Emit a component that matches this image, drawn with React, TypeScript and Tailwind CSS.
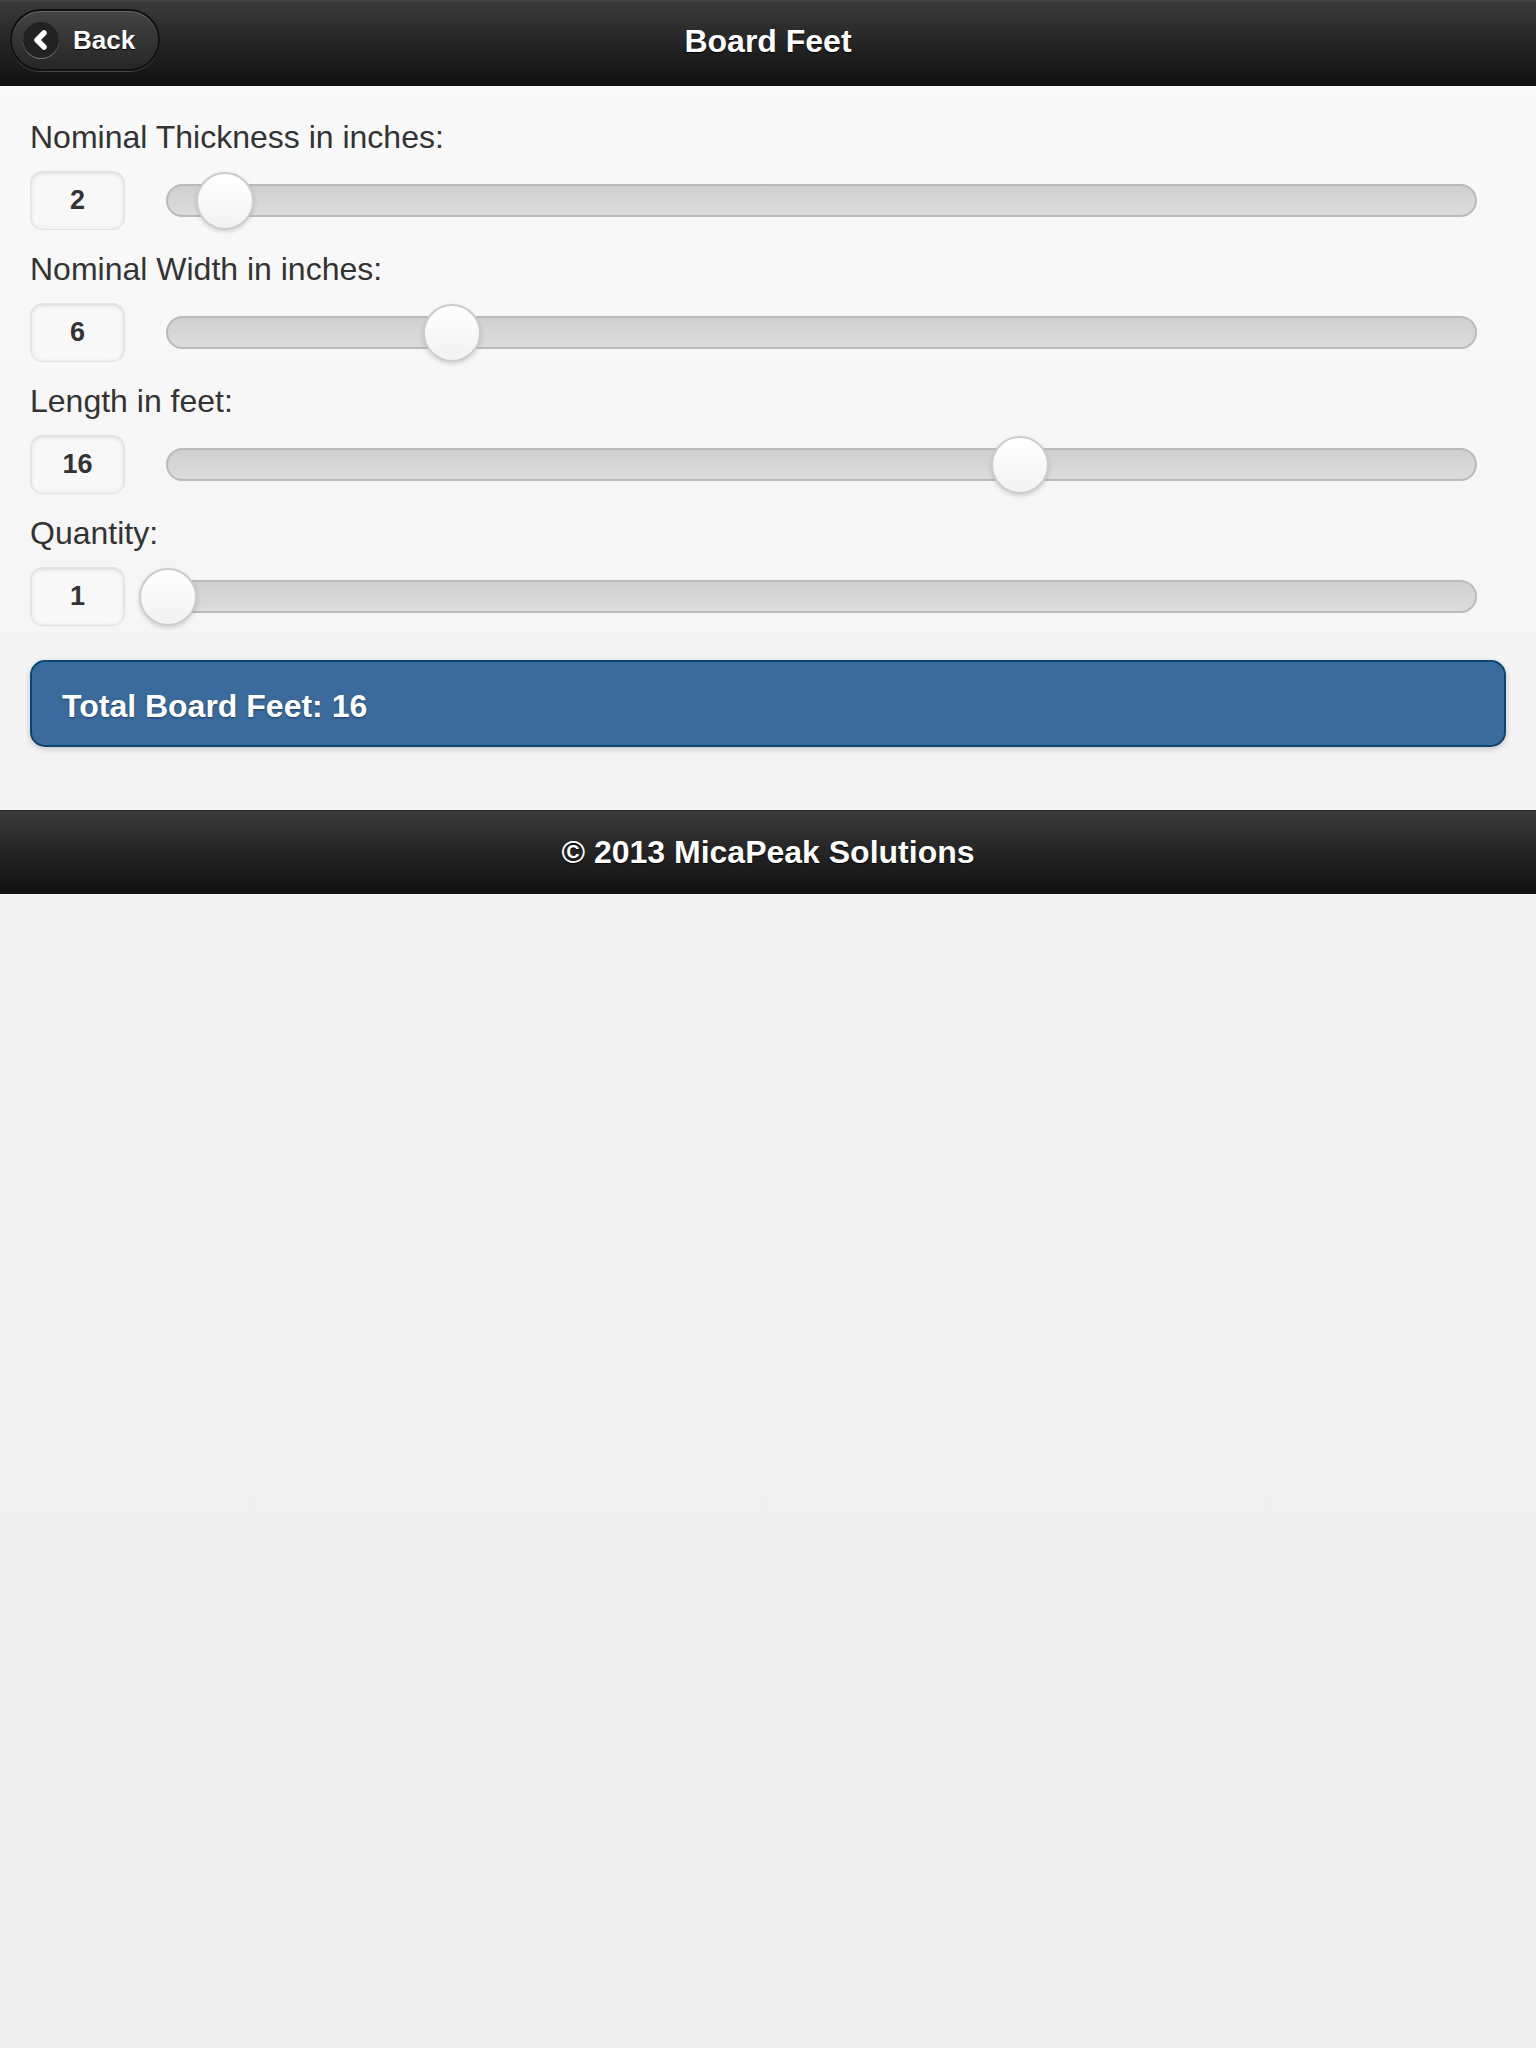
import React from "react";

const rows = [
  { label: "Nominal Thickness in inches:", value: 2, min: 1, max: 24 },
  { label: "Nominal Width in inches:", value: 6, min: 1, max: 24 },
  { label: "Length in feet:", value: 16, min: 1, max: 24 },
  { label: "Quantity:", value: 1, min: 1, max: 24 },
];

function SliderRow({ label, value, min, max }: { label: string; value: number; min: number; max: number }) {
  const pct = ((value - min) / (max - min)) * 100;
  return (
    <div className="flex flex-col gap-4">
      <label className="text-[32px] leading-[36px] text-[#333]">{label}</label>
      <div className="flex items-center h-[59px]">
        <div className="w-[95px] h-[59px] rounded-[12px] border border-[#e2e2e2] bg-[#f8f8f8] shadow-[inset_0_1px_4px_rgba(0,0,0,0.15)] flex items-center justify-center text-[27px] font-bold text-[#333]">
          {value}
        </div>
        <div className="relative flex-1 ml-[41px] mr-[29px] h-[33px] rounded-full border-2 border-[#bbb] bg-gradient-to-b from-[#d0d0d0] to-[#dcdcdc]">
          <div
            className="absolute top-1/2 w-[58px] h-[58px] -translate-x-1/2 -translate-y-1/2 rounded-full border-2 border-[#ccc] bg-gradient-to-b from-white to-[#f2f2f2] shadow-[0_2px_4px_rgba(0,0,0,0.15)]"
            style={{ left: `${pct}%` }}
          />
        </div>
      </div>
    </div>
  );
}

export default function App() {
  return (
    <div className="min-h-[2048px] flex flex-col bg-gradient-to-b from-[#f4f4f4] to-[#eeeeee] font-['Liberation_Sans',Arial,sans-serif]">
      {/* Header */}
      <div className="relative h-[86px] flex items-center justify-center border-t-2 border-[#444] border-b-2 border-b-[#111] bg-gradient-to-b from-[#3a3a3a] to-[#111]">
        <button className="absolute left-[10px] top-[7px] h-[62px] w-[150px] rounded-full border-2 border-[#111] bg-gradient-to-b from-[#444] to-[#262626] shadow-[inset_0_1px_0_rgba(255,255,255,0.2),0_1px_0_rgba(255,255,255,0.2)] flex items-center pl-[11px]">
          <span className="w-[36px] h-[36px] rounded-full bg-[#222] shadow-[0_1px_0_rgba(255,255,255,0.35)] flex items-center justify-center">
            <svg width="22" height="22" viewBox="0 0 22 22">
              <path d="M14 4 L7 11 L14 18" fill="none" stroke="white" strokeWidth="5.5" strokeLinecap="round" strokeLinejoin="round" />
            </svg>
          </span>
          <span className="ml-[14px] text-[26px] font-bold text-white [text-shadow:0_1px_1px_#000]">Back</span>
        </button>
        <h1 className="pb-[5px] text-[32px] font-bold text-white [text-shadow:0_1px_1px_#000]">Board Feet</h1>
      </div>

      {/* Content */}
      <div className="flex flex-col px-[30px] pt-[33px] pb-[63px] bg-gradient-to-b from-[#f9f9f9] to-[#f4f4f4]">
        <div className="flex flex-col gap-[21px]">
          {rows.map((r, i) => (
            <SliderRow key={i} {...r} />
          ))}
        </div>
        <div className="mt-[34px] h-[87px] rounded-[15px] border-2 border-[#0b4672] bg-[#3b6b9c] shadow-[0_2px_6px_rgba(0,0,0,0.2)] flex items-center pl-[30px] pt-[4px]">
          <span className="text-[32px] font-bold text-white [text-shadow:0_1px_2px_#1f3f5e]">Total Board Feet: 16</span>
        </div>
      </div>

      {/* Footer */}
      <div className="h-[84px] flex items-center justify-center border-t border-[#2a2a2a] border-b-2 border-b-[#111] bg-gradient-to-b from-[#3a3a3a] to-[#111]">
        <span className="text-[32px] font-bold text-white [text-shadow:0_1px_1px_#000]">© 2013 MicaPeak Solutions</span>
      </div>
    </div>
  );
}
